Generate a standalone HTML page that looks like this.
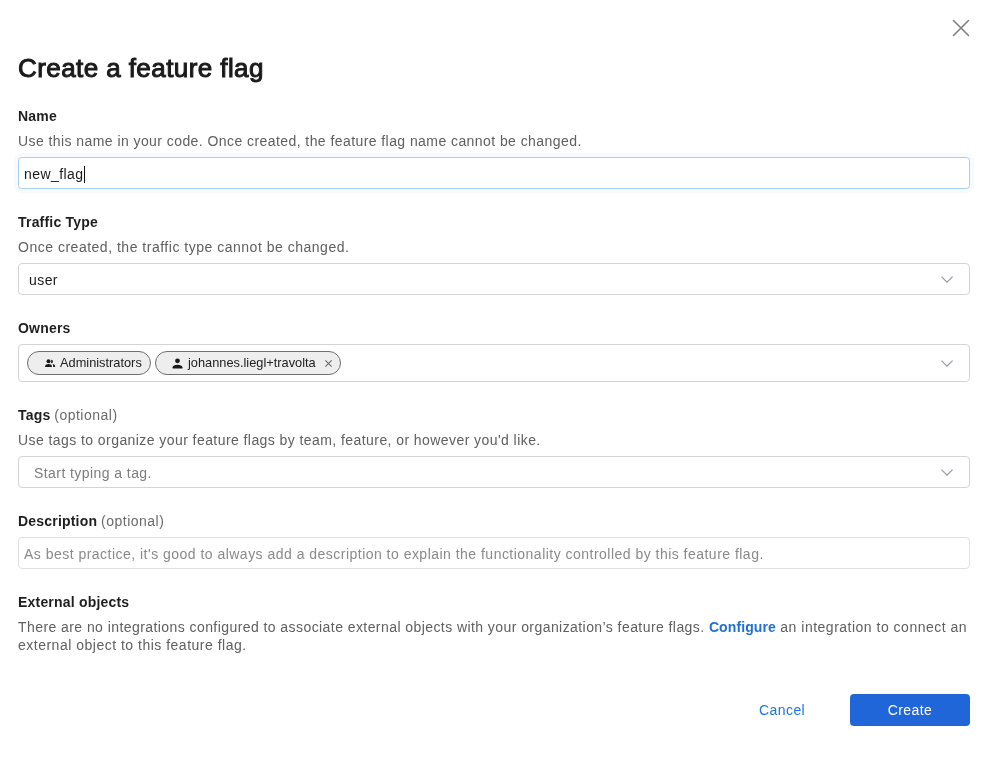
<!DOCTYPE html>
<html>
<head>
<meta charset="utf-8">
<style>
*{box-sizing:border-box;margin:0;padding:0}
html,body{width:988px;height:763px;overflow:hidden;background:#fff}
body{position:relative;font-family:"Liberation Sans",sans-serif;color:#1a1a1a}
.t{position:absolute;white-space:nowrap;line-height:20px;font-size:14px;letter-spacing:0.43px}
.lbl{letter-spacing:0.2px}
.title{position:absolute;left:18px;top:52px;font-size:26px;line-height:32px;font-weight:normal;-webkit-text-stroke:1px #1a1a1a;letter-spacing:0.42px;color:#1a1a1a;white-space:nowrap}
.lbl{font-weight:bold;color:#1f1f1f;left:18px}
.opt{font-weight:normal;color:#6b6b6b;letter-spacing:0.5px;margin-left:-0.3px}
.desc{color:#606060;left:18px}
.box{position:absolute;left:18px;width:952px;border:1px solid #d4d4d4;border-radius:4px;background:#fff}
.chev{position:absolute;right:16px;width:12px;height:7px}
.chip{position:absolute;top:6px;height:24px;border:1px solid #6e6e6e;border-radius:12px;background:#eeeeee;font-size:12.8px;line-height:22px;color:#222;white-space:nowrap}
</style>
</head>
<body>
<div id="root" style="position:absolute;left:0;top:0;width:988px;height:763px;background:#fff;will-change:transform">
<svg style="position:absolute;left:952px;top:19px" width="18" height="18" viewBox="0 0 18 18"><path d="M1.5 1.5L16.5 16.5M16.5 1.5L1.5 16.5" stroke="#808080" stroke-width="1.6" stroke-linecap="round" fill="none"/></svg>

<div class="title">Create a feature flag</div>

<div class="t lbl" style="top:106px">Name</div>
<div class="t desc" style="top:131px">Use this name in your code. Once created, the feature flag name cannot be changed.</div>
<div class="box" style="top:157px;height:32px;border-color:#a6d0f5;border-radius:3.5px;box-shadow:0 0 0 4px #f7fbfe"></div>
<div class="t" style="left:24px;top:164px;color:#1a1a1a">new_flag<span style="display:inline-block;width:1px;height:17px;background:#111;vertical-align:-4px;margin-left:1px"></span></div>

<div class="t lbl" style="top:212px">Traffic Type</div>
<div class="t desc" style="top:237px;letter-spacing:0.51px">Once created, the traffic type cannot be changed.</div>
<div class="box" style="top:263px;height:32px"><svg class="chev" style="top:12px" viewBox="0 0 12 7"><path d="M0.4 0.6L6 6.1L11.6 0.6" stroke="#989da6" stroke-width="1.3" fill="none"/></svg></div>
<div class="t" style="left:29px;top:270px;color:#1a1a1a">user</div>

<div class="t lbl" style="top:318px">Owners</div>
<div class="box" style="top:344px;height:38px">
  <div class="chip" style="left:8px;width:124px">
    <svg style="position:absolute;left:16px;top:6px" width="12" height="11" viewBox="0 0 12 11"><circle cx="7.2" cy="3.45" r="1.8" fill="#1a1a1a"/><path d="M8.5 6.1C9.9 6.3 11.1 7.1 11.1 8.1V9H9.2C9.2 7.9 9.0 6.9 8.5 6.1Z" fill="#1a1a1a"/><circle cx="4.5" cy="3.3" r="2.75" fill="#eee"/><path d="M0.4 9.6V8.2C0.4 6.4 2.6 5.4 4.5 5.4S8.6 6.4 8.6 8.2V9.6Z" fill="#eee"/><circle cx="4.5" cy="3.3" r="2" fill="#1a1a1a"/><path d="M1.1 8.9V8.3C1.1 6.9 3 6.1 4.5 6.1S7.9 6.9 7.9 8.3V8.9Z" fill="#1a1a1a"/></svg>
    <span style="position:absolute;left:32px;top:0">Administrators</span>
  </div>
  <div class="chip" style="left:136px;width:186px">
    <svg style="position:absolute;left:16.1px;top:6px" width="11" height="11" viewBox="0 0 11 11"><circle cx="5.5" cy="2.8" r="2.4" fill="#1a1a1a"/><path d="M0.6 10.4V9.3C0.6 7.7 2.8 6.8 5.5 6.8S10.4 7.7 10.4 9.3V10.4Z" fill="#1a1a1a"/></svg>
    <span style="position:absolute;left:32px;top:0">johannes.liegl+travolta</span>
    <svg style="position:absolute;left:169px;top:8px" width="7" height="7" viewBox="0 0 7 7"><path d="M0.4 0.4L6.6 6.6M6.6 0.4L0.4 6.6" stroke="#6a6a6a" stroke-width="1.1" fill="none"/></svg>
  </div>
  <svg class="chev" style="top:15px" viewBox="0 0 12 7"><path d="M0.4 0.6L6 6.1L11.6 0.6" stroke="#989da6" stroke-width="1.3" fill="none"/></svg>
</div>

<div class="t lbl" style="top:405px">Tags <span class="opt">(optional)</span></div>
<div class="t desc" style="top:430px">Use tags to organize your feature flags by team, feature, or however you'd like.</div>
<div class="box" style="top:456px;height:32px"><svg class="chev" style="top:12px" viewBox="0 0 12 7"><path d="M0.4 0.6L6 6.1L11.6 0.6" stroke="#989da6" stroke-width="1.3" fill="none"/></svg></div>
<div class="t" style="left:34px;top:463px;color:#7d7d7d">Start typing a tag.</div>

<div class="t lbl" style="top:511px">Description <span class="opt">(optional)</span></div>
<div class="box" style="top:537px;height:32px;border-color:#e0e0e0"></div>
<div class="t" style="left:24px;top:544px;color:#8a8a8a;letter-spacing:0.48px">As best practice, it's good to always add a description to explain the functionality controlled by this feature flag.</div>

<div class="t lbl" style="top:592px">External objects</div>
<div class="t desc" style="top:618px;line-height:18px">There are no integrations configured to associate external objects with your organization’s feature flags. <b style="color:#1f6fd6;letter-spacing:0.1px">Configure</b><span style="letter-spacing:0.5px"> an integration to connect an</span><br><span style="letter-spacing:0.5px">external object to this feature flag.</span></div>

<div class="t" style="left:759px;top:700px;color:#1f74e6">Cancel</div>
<div style="position:absolute;left:850px;top:694px;width:120px;height:32px;background:#2166d8;border-radius:4px;color:#fff;font-size:14px;line-height:32px;text-align:center;letter-spacing:0.4px">Create</div>
</div>
</body>
</html>
